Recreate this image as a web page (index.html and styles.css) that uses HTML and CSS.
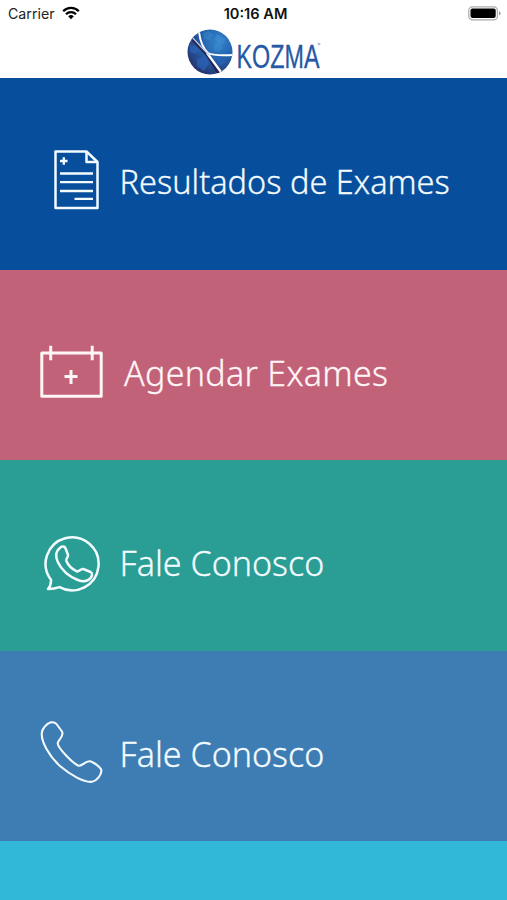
FILE: index.html
```
<!DOCTYPE html>
<html lang="pt-BR">
<head>
<meta charset="utf-8">
<title>Kozma</title>
<link rel="stylesheet" href="styles.css">
</head>
<body>
<header class="header">
  <div class="status">
    <div class="carrier"><span>Carrier</span>
      <svg width="18" height="14" viewBox="0 0 18 14"><g fill="none" stroke="#000" stroke-width="2.3"><path d="M1.2 5.2a11 11 0 0 1 15.6 0"/><path d="M4 8.3a7 7 0 0 1 10 0"/></g><path d="M6.2 10.3a4 4 0 0 1 5.6 0L9 13.2z"/></svg>
    </div>
    <time class="time">10:16 AM</time>
    <div class="battery"><svg width="33" height="15" viewBox="0 0 33 15"><rect x=".8" y=".8" width="28.6" height="13" rx="3.6" fill="#fff" stroke="#aaa" stroke-width="1.2"/><rect x="2.5" y="2.5" width="25.2" height="9.6" rx="2"/><path d="M31 5v4.6q1.5-.7 1.5-2.3T31 5z" fill="#999"/></svg></div>
  </div>
  <div class="logo">
    <svg width="46" height="46" viewBox="0 0 46 46">
      <defs>
        <radialGradient id="globe" cx=".68" cy=".28" r=".85"><stop offset="0" stop-color="#3486cf"/><stop offset=".45" stop-color="#2461ac"/><stop offset=".8" stop-color="#26407f"/><stop offset="1" stop-color="#26265a"/></radialGradient>
        <clipPath id="disc"><circle cx="23" cy="23" r="22.5"/></clipPath>
      </defs>
      <g clip-path="url(#disc)">
        <path fill="url(#globe)" d="M0 0h46v46H0z"/>
        <path fill="#4a9bd8" opacity=".3" d="M16 4l6-2 4 4-4 5-5-1zM30 5l9 5-2 5-5-1-4-4zM27 16l5-2 4 5-5 4-5-3z"/>
        <path fill="#2c62b8" opacity=".7" d="M3 16l6 1 4 5-5 3-5-2zM10 30l8-2 4 6-5 8-7-5zM28 28l9 1 2 4-6 4z"/>
        <path fill="#242653" d="M7 8l14 17 15 18-6 2-10-17L5 12z"/>
        <g fill="none" stroke="#fff"><path d="M20 24L34 43" stroke-width="2.300"/><path d="M12 3Q14 18 21 24 26 27 46 26" stroke-width="1.9"/><path d="M6 9Q14 18 22 26" stroke="#b8cbed" stroke-width="1.300"/></g>
      </g>
    </svg>
    <svg class="wordmark" width="92" height="44" viewBox="0 -4 92 44"><text class="brand" x="3.500" y="30" textLength="83" lengthAdjust="spacingAndGlyphs">KOZMA</text><circle cx="86" cy="6" r="1" fill="none" stroke="#7188b5" stroke-width=".6"/></svg>
  </div>
</header>
<main class="menu">
  <a class="item results">
    <svg class="icon" width="66" height="66" viewBox="0 0 66 66"><path d="M17.500 4.500h31L59.500 15v46h-42z"/><path d="M48.500 4.500V15h11"/><path d="M22 14h7.500M25.800 10.200v7.500M22 26.500h33M22 35.200h33M22 44h33M36.500 51.800H55" stroke-width="2.300"/></svg>
    <span class="label">Resultados de Exames</span>
  </a>
  <a class="item schedule">
    <svg class="icon" width="66" height="66" viewBox="0 0 66 66"><path d="M3.800 14h59.400v43.200H3.800zM12.700 6.800v14.500M54.200 6.800v14.500M26.500 37.500h13M33 31v14" stroke-width="3"/></svg>
    <span class="label">Agendar Exames</span>
  </a>
  <a class="item whatsapp">
    <svg class="icon" width="66" height="66" viewBox="-.5 -.3 66 66"><path d="M12.500 50.500A26.500 26.500 0 1 1 21 57.800Q15.500 59.800 9.500 59.700 12.800 56 12.500 50.500z"/><path d="M21 19c2-2 5-2.500 6 0l2.500 6.500c.7 2.400-2.500 3.800-1.700 6 2 5 6 8.500 10.500 10.500 2.200.9 4-3.100 6.500-2.300l7.300 3c2.200 1.200 1.500 4 .2 5.800-3 3.700-8 4.300-13 2.200-8-3.200-16-9.500-20-18-2.500-5.500-2-10.500 1.700-13.700z"/></svg>
    <span class="label">Fale Conosco</span>
  </a>
  <a class="item phone">
    <svg class="icon" width="66" height="66" viewBox="0 .5 66 66"><path d="M3.800 13.500C4 9.500 8.500 4 12.500 2.900 16 2.200 18.500 4 20 6.500L24 12C26.500 17 20 20 19.700 23.700 20 29 35 43.500 40 46 44.500 47.500 46.500 41.500 51.500 41.700 55 42 62.500 47.500 63.300 50.500 64 55 58.500 61.500 54 62.300 46 63.200 32.500 55.500 22 46.500 11 36.500 3 22 3.800 13.500z" stroke-width="2.100"/></svg>
    <span class="label">Fale Conosco</span>
  </a>
  <div class="next"></div>
</main>
</body>
</html>
```
FILE: styles.css
```
* { box-sizing: border-box; }
body { margin: 0; height: 900px; overflow: hidden; display: flex; flex-direction: column; background: #fff; font-family: "Noto Sans", sans-serif; }
.header { height: 78px; flex: none; }
.status { height: 29px; padding: 0 6px 0 8px; display: grid; grid-template-columns: 1fr auto 1fr; align-items: center; font: 14.2px/28px Inter, sans-serif; color: #222; }
.carrier { display: flex; align-items: center; gap: 7px; padding-bottom: 1px; }
.carrier svg { margin-top: -2px; }
.time { font-weight: 600; font-size: 14.6px; line-height: 28px; padding-bottom: 1px; margin-left: 2px; color: #111; }
.battery { display: flex; justify-content: flex-end; margin-top: -3px; }
svg { display: block; }
.logo { display: flex; padding-left: 187px; }
.wordmark { margin-top: 5px; overflow: visible; }
.brand { font: 33.5px "Liberation Sans", sans-serif; fill: #2558a5; stroke: #2558a5; stroke-width: .3px; }
.menu { flex: 1; display: grid; grid-template-rows: 191.5px repeat(3, 190.5px) 59px; }
.item { display: flex; align-items: center; padding-left: 38px; color: #f3fbff; }
.icon { flex: none; fill: none; stroke: currentColor; stroke-width: 2.5; stroke-linejoin: round; margin-top: 14px; }
.label { font-size: 34px; font-weight: 300; line-height: 46px; white-space: nowrap; margin-left: 15.5px; margin-top: 15px; -webkit-text-stroke: .3px currentColor; }
.results .icon { margin-top: 13px; }
.results { background: #074e9d; }
.results .label { font-size: 32.5px; margin-left: 15.5px; margin-top: 16px; }
.schedule { background: #c16279; color: #fff5f6; }
.schedule .label { margin-left: 20px; letter-spacing: .3px; margin-top: 16px; }
.whatsapp { background: #2a9d95; }
.phone { background: #3e7db3; }
.phone .label { margin-top: 17px; }
.next { background: #31b8d8; }
```
